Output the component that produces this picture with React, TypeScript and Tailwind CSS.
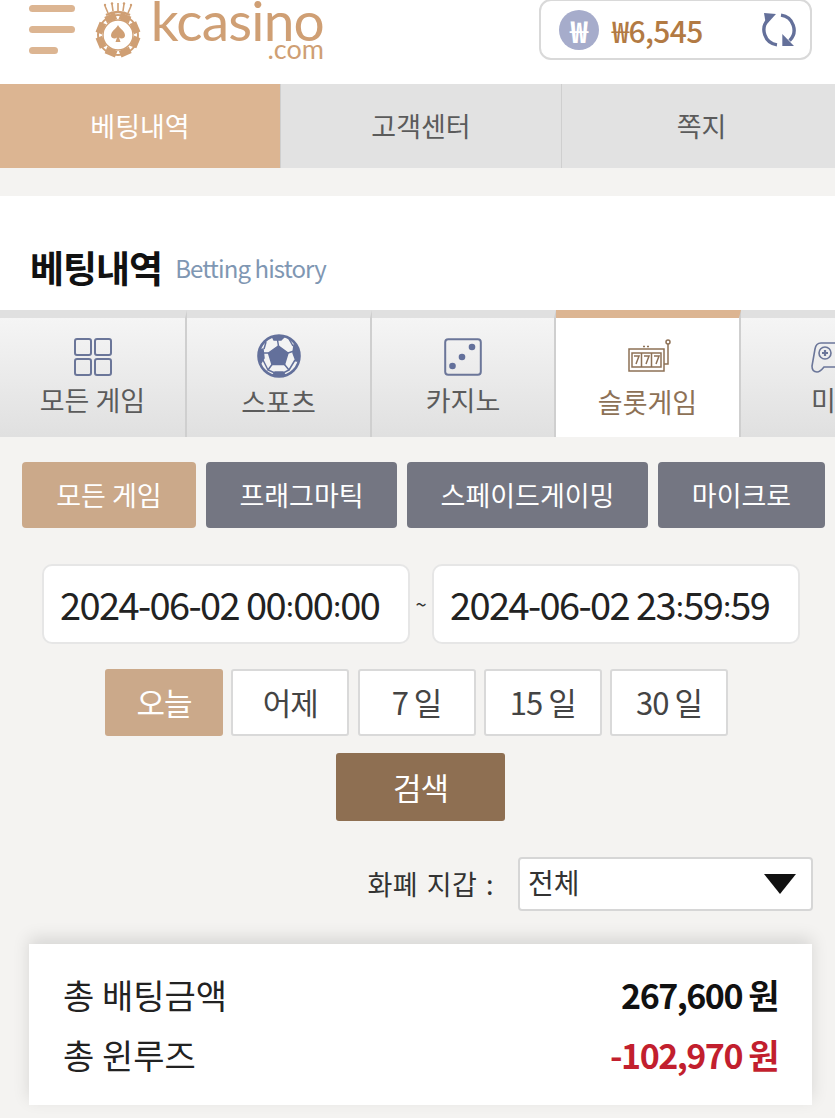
import React from "react";

const KR = "font-['Noto_Sans_CJK_KR','Noto_Sans',sans-serif]";

function Logo() {
  const bits = [0, 45, 90, 135, 180, 225, 270, 315];
  return (
    <svg width="50" height="58" viewBox="0 0 50 58" className="shrink-0">
      <g fill="none" stroke="#cf9f74" strokeWidth="1.6">
        <path d="M15 13 L12 6 M20 11 L19 4 M25 11 L25 3 M30 11 L31 4 M35 13 L38 6" />
        <path d="M13 15 Q25 9 37 15" strokeWidth="2.4" />
      </g>
      <g fill="#cf9f74">
        <circle cx="12" cy="5" r="1.2" /><circle cx="19" cy="3.500" r="1.2" /><circle cx="31" cy="3.500" r="1.2" /><circle cx="38" cy="5" r="1.2" />
      </g>
      <circle cx="25" cy="35" r="20" fill="none" stroke="#cf9f74" strokeWidth="2" />
      <circle cx="25" cy="35" r="15" fill="#fff" stroke="#cf9f74" strokeWidth="1.4" />
      {bits.map((a) => (
        <rect key={a} x="19.5" y="13" width="11" height="7" fill="#cf9f74" transform={`rotate(${a + 22} 25 35)`} />
      ))}
      <path d="M25 25 C27 29 32 31 32 35.500 C32 38.500 28 39.500 26 37.500 L27.500 42 L22.500 42 L24 37.500 C22 39.500 18 38.500 18 35.500 C18 31 23 29 25 25 Z" fill="#cf9f74" />
    </svg>
  );
}

function Refresh() {
  return (
    <svg width="36" height="36" viewBox="0 0 36 36" fill="none" className="shrink-0">
      <path d="M7.400 7.400 A 15 15 0 0 0 16 32.900" stroke="#64709a" strokeWidth="3.400" />
      <path d="M20 3.100 A 15 15 0 0 1 28.600 28.600" stroke="#64709a" strokeWidth="3.400" />
      <path d="M3 1 L15 2 L5 13 Z" fill="#64709a" />
      <path d="M33 34 L21.300 34 L21.300 22 Z" fill="#64709a" />
    </svg>
  );
}

function GridIcon() {
  return (
    <svg width="38" height="38" viewBox="0 0 38 38" fill="none" stroke="#6b7699" strokeWidth="2">
      <rect x="1" y="1" width="16" height="16" rx="2" />
      <rect x="21" y="1" width="16" height="16" rx="2" />
      <rect x="1" y="21" width="16" height="16" rx="2" />
      <rect x="21" y="21" width="16" height="16" rx="2" />
    </svg>
  );
}

function BallIcon() {
  return (
    <svg width="44" height="44" viewBox="0 0 44 44">
      <defs>
        <clipPath id="ballClip"><circle cx="22" cy="22" r="20.500" /></clipPath>
      </defs>
      <circle cx="22" cy="22" r="20.500" fill="#f3f3f3" />
      <g clipPath="url(#ballClip)" fill="#63709b" stroke="#63709b" strokeWidth="1.500">
        <path d="M21.500 12 L31 19 L27.500 30.500 L15 30.500 L11.500 19 Z" />
        <path d="M15 2 L28 2 L24 6 L17 6 Z" />
        <path d="M0 16 L6 15 L7 24 L4 29 L0 28 Z" />
        <path d="M37 11 L44 10 L44 27 L39 27 L36 19 Z" />
        <path d="M18 38 L26 38 L30 44 L14 44 Z" />
        <path d="M21.500 12 L20.500 6 M11.500 19 L6 19 M31 19 L37 17 M15 30.500 L11 36 L18 39 M27.500 30.500 L32 36 L26 39 M6 26 L11 36 M38 26 L32 36 M7 15 L9 8 M36 12 L32 5" fill="none" />
      </g>
      <circle cx="22" cy="22" r="20.500" fill="none" stroke="#63709b" strokeWidth="2.600" />
    </svg>
  );
}

function DiceIcon() {
  return (
    <svg width="38" height="38" viewBox="0 0 38 38">
      <rect x="1.200" y="1.200" width="35.600" height="35.600" rx="3" fill="none" stroke="#6b7699" strokeWidth="2" />
      <circle cx="28" cy="9" r="3.300" fill="#63709b" />
      <circle cx="18" cy="19" r="3.300" fill="#63709b" />
      <circle cx="8.500" cy="28" r="3.300" fill="#63709b" />
    </svg>
  );
}

function SlotIcon() {
  return (
    <svg width="44" height="34" viewBox="0 0 44 34" fill="none" stroke="#8d7156" strokeWidth="1.500">
      <rect x="1" y="10" width="35" height="22" />
      <rect x="4" y="14" width="29" height="14" />
      <path d="M13.500 14 V28 M23.500 14 V28" />
      <path d="M6 17 H11 L8 25" />
      <path d="M16 17 H21 L18 25" />
      <path d="M26 17 H31 L28 25" />
      <path d="M36 25 H40 V5" />
      <circle cx="40" cy="3" r="2" />
      <path d="M15 7.500 H22" strokeDasharray="2 2" />
    </svg>
  );
}

function PadIcon() {
  return (
    <svg width="46" height="34" viewBox="0 0 46 34" fill="none" stroke="#6b7699" strokeWidth="1.600">
      <path d="M10 2 H36 Q41 2 42 8 L45 25 Q45 31 40 31 Q37 31 33 26 H13 Q9 31 6 31 Q1 31 1 25 L4 8 Q5 2 10 2 Z" />
      <circle cx="14" cy="12" r="6" />
      <path d="M14 9 V15 M11 12 H17" strokeWidth="2.200" />
    </svg>
  );
}

function Stamp({ date, a, b, c }: { date: string; a: string; b: string; c: string }) {
  const colon = <span className="relative -top-[3px] text-[28px] mx-[1px]">:</span>;
  return (
    <div className="w-[368px] h-[80px] rounded-[10px] border-2 border-[#e6e6e6] bg-white flex items-center pl-[16px] pb-[2px] text-[38px] text-[#222] tracking-[-1.600px] whitespace-nowrap">
      <span>{date} {a}{colon}{b}{colon}{c}</span>
    </div>
  );
}

const gameTabs = [
  { label: "모든 게임", icon: <GridIcon />, w: "w-[187px]", pt: "pt-[17px]", t: "mt-[2px]" },
  { label: "스포츠", icon: <BallIcon />, w: "w-[185px]", pt: "pt-[16px]", t: "mt-[5px]" },
  { label: "카지노", icon: <DiceIcon />, w: "w-[184px]", pt: "pt-[17px]", t: "mt-[2px]" },
];

const tabBase = "shrink-0 border-t-[8px] border-t-[#e0e0e0] bg-clip-padding bg-gradient-to-b from-[#f5f5f5] to-[#e0e0e0]";

export default function App() {
  return (
    <div className={`w-[835px] h-[1118px] overflow-hidden bg-[#f4f3f1] ${KR}`}>
      {/* header */}
      <header className="h-[84px] bg-white flex items-start">
        <div className="ml-[29px] mt-[5px] w-[46px] flex flex-col gap-[14px] shrink-0">
          <span className="block h-[7px] w-[46px] rounded-full bg-[#dcb592]" />
          <span className="block h-[7px] w-[46px] rounded-full bg-[#dcb592]" />
          <span className="block h-[7px] w-[29px] rounded-full bg-[#dcb592]" />
        </div>
        <div className="ml-[18px] flex items-start">
          <Logo />
          <div className="ml-[9px] w-[172px] flex flex-col items-end font-['Lato',sans-serif] text-[#cf9f74]">
            <span className="text-[55px] leading-[41px] h-[41px] font-normal tracking-[-0.800px] whitespace-nowrap">kcasino</span>
            <span className="text-[27px] leading-[16px] font-normal">.com</span>
          </div>
        </div>
        <div className="ml-auto mr-[23px] h-[61px] w-[273px] -mt-px rounded-[12px] border-2 border-[#d9d9d9] bg-white flex items-center pl-[18px] pr-[13px]">
          <span className="w-[40px] h-[40px] rounded-full bg-[#a6accb] text-white flex items-center justify-center text-[30px] font-bold leading-none shrink-0">₩</span>
          <span className="ml-[13px] text-[30px] font-medium text-[#b27a43] tracking-[-0.600px] leading-none">₩6,545</span>
          <span className="ml-auto"><Refresh /></span>
        </div>
      </header>

      {/* top tabs */}
      <nav className="h-[84px] flex text-[27px] text-[#5b5b5b] bg-[#e2e2e2]">
        <div className="w-[280px] bg-[#dcb592] text-white flex items-center justify-center">베팅내역</div>
        <div className="w-[281px] border-l border-[#cfcfcf] flex items-center justify-center">고객센터</div>
        <div className="flex-1 border-l border-[#cfcfcf] pl-[6px] flex items-center justify-center">쪽지</div>
      </nav>

      {/* title */}
      <section className="mt-[28px] h-[114px] bg-white flex items-end pl-[30px] pb-[21px]">
        <h1 className="text-[37px] font-bold text-[#111] leading-[44px] tracking-[-1px]">베팅내역</h1>
        <span className="ml-[13px] text-[24px] text-[#7f97b3] leading-[42px] tracking-[-0.900px]">Betting history</span>
      </section>

      {/* game tabs */}
      <div className="h-[127px] flex overflow-hidden">
        {gameTabs.map((g) => (
          <div key={g.label} className={`${g.w} ${tabBase} ${g.pt} border-r-2 border-r-[#cfcfcf] flex flex-col items-center text-[27px] text-[#5b5b5b]`}>
            <div className="h-[44px] flex items-center justify-center">{g.icon}</div>
            <span className={`${g.t} leading-[38px] whitespace-nowrap`}>{g.label}</span>
          </div>
        ))}
        <div className="w-[185px] shrink-0 border-t-[8px] border-t-[#dcb592] bg-white border-r-2 border-r-[#cfcfcf] flex flex-col items-center pt-[16px] pl-[4px] text-[27px] text-[#8d7156]">
          <div className="h-[44px] flex items-center justify-center"><SlotIcon /></div>
          <span className="mt-[5px] -ml-[4px] leading-[38px] whitespace-nowrap">슬롯게임</span>
        </div>
        <div className={`w-[200px] ${tabBase} flex flex-col items-start pl-[70px] pt-[18px] text-[27px] text-[#5b5b5b]`}>
          <div className="h-[44px] flex items-center"><PadIcon /></div>
          <span className="mt-[1px] leading-[38px] whitespace-nowrap">미니게임</span>
        </div>
      </div>

      {/* vendor filters */}
      <div className="mt-[25px] pl-[22px] flex gap-[10px] h-[66px] text-[27px] text-white whitespace-nowrap">
        <div className="w-[174px] rounded-[4px] bg-[#cba98a] flex items-center justify-center">모든 게임</div>
        <div className="w-[191px] rounded-[4px] bg-[#747682] flex items-center justify-center">프래그마틱</div>
        <div className="w-[241px] rounded-[4px] bg-[#747682] flex items-center justify-center">스페이드게이밍</div>
        <div className="w-[167px] rounded-[4px] bg-[#747682] flex items-center justify-center">마이크로</div>
      </div>

      {/* dates */}
      <div className="mt-[36px] pl-[42px] flex items-center h-[80px]">
        <Stamp date="2024-06-02" a="00" b="00" c="00" />
        <span className="w-[22px] text-center text-[20px] text-[#333]">~</span>
        <Stamp date="2024-06-02" a="23" b="59" c="59" />
      </div>

      {/* quick ranges */}
      <div className="mt-[25px] flex justify-center gap-[8.250px] h-[67px] text-[31px] text-[#444] tracking-[-1px] pr-[2px]">
        <div className="w-[118px] rounded-[3px] bg-[#cba98a] text-white flex items-center justify-center">오늘</div>
        {["어제", "7 일", "15 일", "30 일"].map((d) => (
          <div key={d} className="w-[118px] rounded-[3px] border-2 border-[#d9d9d9] bg-white flex items-center justify-center">{d}</div>
        ))}
      </div>

      {/* search */}
      <div className="mt-[17px] pl-[6px] flex justify-center">
        <button className="w-[169px] h-[68px] rounded-[3px] bg-[#8e6f52] text-white text-[31px] tracking-[-1px]">검색</button>
      </div>

      {/* wallet */}
      <div className="mt-[36px] pr-[22px] flex justify-end items-center gap-[24px] h-[54px]">
        <span className="text-[27px] text-[#333] tracking-[0.500px] [word-spacing:2px] whitespace-nowrap">화폐 지갑 :</span>
        <div className="w-[295px] h-[54px] rounded-[4px] border-2 border-[#d6d6d6] bg-white flex items-center pl-[8px] pr-[15px] text-[28px] text-[#333]">
          <span className="-mt-[4px]">전체</span>
          <svg width="32" height="20" viewBox="0 0 32 20" className="ml-auto"><path d="M0 0 H32 L16 20 Z" fill="#111" /></svg>
        </div>
      </div>

      {/* summary */}
      <div className="mt-[33px] ml-[29px] mr-[23px] h-[161px] bg-white shadow-[0_-6px_16px_rgba(0,0,0,0.12)] flex flex-col justify-center px-[34px] gap-[16px] text-[34px] leading-[44px]">
        <div className="flex justify-between items-center">
          <span className="text-[#222]">총 배팅금액</span>
          <span className="font-bold text-[#111] tracking-[-1.500px]">267,600 원</span>
        </div>
        <div className="flex justify-between items-center">
          <span className="text-[#222]">총 윈루즈</span>
          <span className="font-bold text-[#c21f2e] tracking-[-1.500px]">-102,970 원</span>
        </div>
      </div>
    </div>
  );
}
